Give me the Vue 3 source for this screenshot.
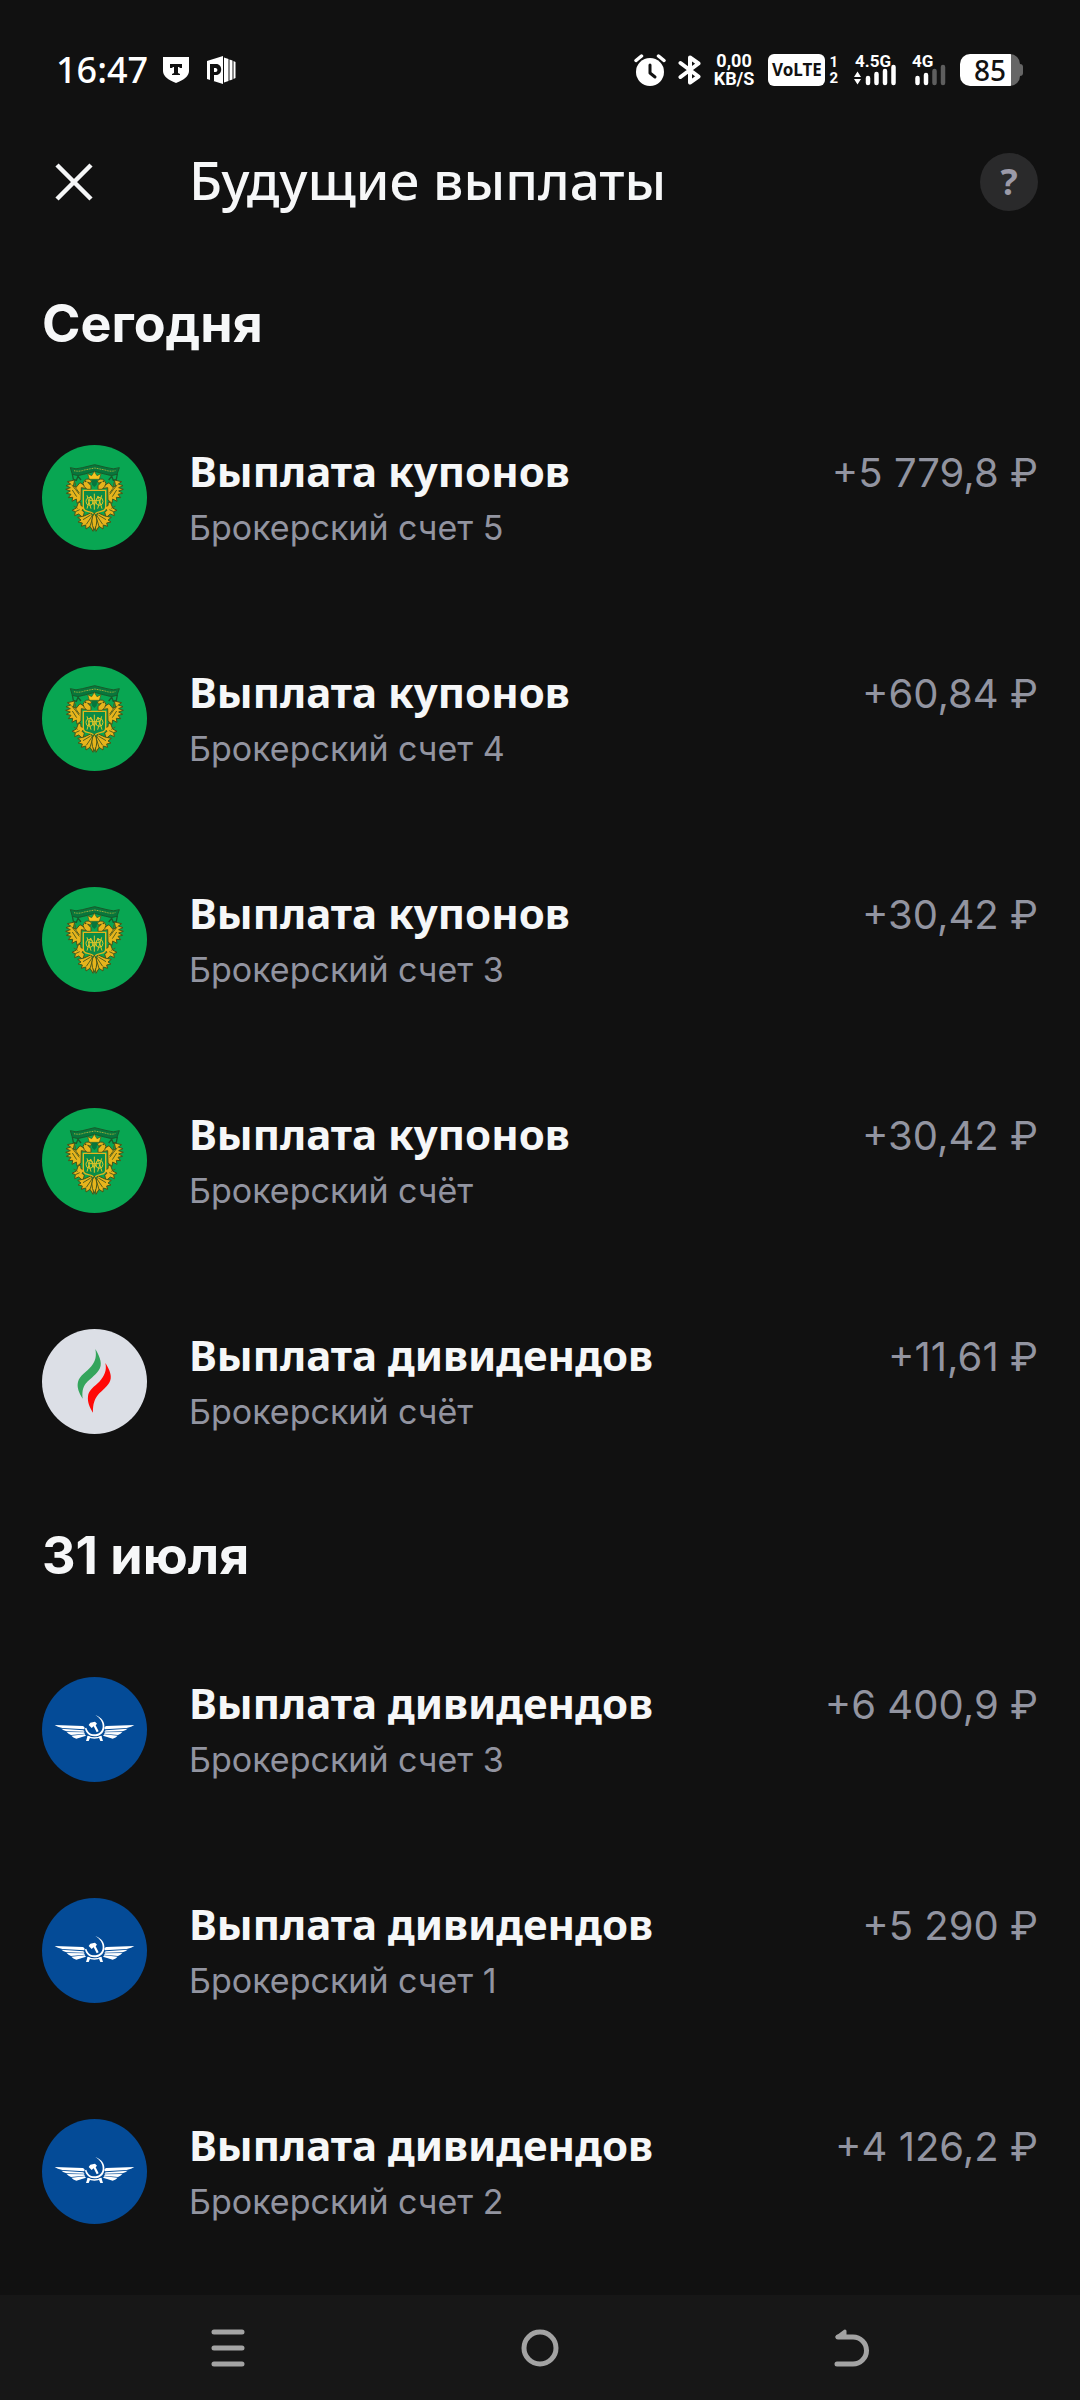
<script setup>
const groups = [
  {
    title: 'Сегодня',
    items: [
      { logo: 'ministry', name: 'Выплата купонов', account: 'Брокерский счет 5', amount: '+5 779,8 ₽' },
      { logo: 'ministry', name: 'Выплата купонов', account: 'Брокерский счет 4', amount: '+60,84 ₽' },
      { logo: 'ministry', name: 'Выплата купонов', account: 'Брокерский счет 3', amount: '+30,42 ₽' },
      { logo: 'ministry', name: 'Выплата купонов', account: 'Брокерский счёт', amount: '+30,42 ₽' },
      { logo: 'flame', name: 'Выплата дивидендов', account: 'Брокерский счёт', amount: '+11,61 ₽' },
    ],
  },
  {
    title: '31 июля',
    items: [
      { logo: 'wings', name: 'Выплата дивидендов', account: 'Брокерский счет 3', amount: '+6 400,9 ₽' },
      { logo: 'wings', name: 'Выплата дивидендов', account: 'Брокерский счет 1', amount: '+5 290 ₽' },
      { logo: 'wings', name: 'Выплата дивидендов', account: 'Брокерский счет 2', amount: '+4 126,2 ₽' },
    ],
  },
]
</script>

<template>
  <div class="screen">
    <div class="status">
      <div class="status-left">
        <span class="time">16:47</span>
        <svg width="28" height="28" viewBox="0 0 28 28" aria-hidden="true">
          <path d="M1 1h26v14c0 5-5 9-13 12C6 24 1 20 1 15z" fill="#fff" />
          <path d="M8 8h12v4h-2l-1-1h-1v6l2 1v1h-8v-1l2-1v-6h-1l-1 1H8z" fill="#111" />
        </svg>
        <svg class="office" width="30" height="30" viewBox="0 0 30 30" aria-hidden="true">
          <path d="M1 6 17 1v28L1 24z" fill="#fff" />
          <path d="M4 9h6c7 0 7 11 0 11H8v6H4z" fill="#111" />
          <path d="M8 13h1.500c2.500 0 2.500 4 0 4H8z" fill="#fff" />
          <path d="M18 2.500 22.500 4v22L18 27.500zM23.500 4.500l3 1v19l-3 1zM27.500 6l2 1v16l-2 1z" fill="#fff" />
        </svg>
      </div>
      <div class="status-right">
        <svg class="alarm" width="32" height="34" viewBox="0 0 32 34" aria-hidden="true">
          <circle cx="16" cy="19" r="14" fill="#fff" />
          <path d="M2 7.500 7.500 3M30 7.500 24.500 3" stroke="#fff" stroke-width="3.500" stroke-linecap="round" />
          <path d="M16 12v8l5 4" fill="none" stroke="#111" stroke-width="3" stroke-linecap="round" stroke-linejoin="round" />
        </svg>
        <svg class="bluetooth" width="24" height="32" viewBox="0 0 24 32" aria-hidden="true">
          <path d="M2.500 9 20.500 22.500 12 28.500v-25l8.500 6L2.500 23" fill="none" stroke="#fff" stroke-width="4" stroke-linecap="round" stroke-linejoin="round" />
        </svg>
        <span class="speed"><span>0,00</span><span>KB/S</span></span>
        <span class="volte">VoLTE</span>
        <span class="sims"><span>1</span><span>2</span></span>
        <svg class="signal" width="46" height="42" viewBox="0 -4 46 42">
          <text x="1" y="14">4.5G</text>
          <path d="M0 24h7L3.500 18.500zM0 26h7L3.500 31.500z" fill="#fff" />
          <path d="M14 25v5M22.500 21v9M31 18v12M39.500 14v16" stroke="#fff" stroke-width="4.500" stroke-linecap="round" />
        </svg>
        <svg class="signal second" width="36" height="42" viewBox="0 -4 36 42">
          <text x="0" y="14">4G</text>
          <path d="M5.500 25v5M14 22v8" stroke="#fff" stroke-width="4.500" stroke-linecap="round" />
          <path d="M22.500 18v12M31 14v16" stroke="#5e5e5e" stroke-width="4.500" stroke-linecap="round" />
        </svg>
        <span class="battery">85</span>
      </div>
    </div>

    <header class="header">
      <button class="close" type="button" aria-label="Закрыть">
        <svg width="38" height="38" viewBox="0 0 38 38" aria-hidden="true">
          <path d="m2 2 34 34M36 2 2 36" stroke="#f6f7f8" stroke-width="4.500" />
        </svg>
      </button>
      <h1>Будущие выплаты</h1>
      <button class="help" type="button">?</button>
    </header>

    <main>
      <section v-for="group in groups" :key="group.title">
        <h2>{{ group.title }}</h2>
        <ul>
          <li v-for="(item, i) in group.items" :key="i" class="row">
            <svg v-if="item.logo === 'ministry'" class="logo" viewBox="36 45 315 315" aria-hidden="true">
              <circle cx="193.500" cy="202.500" r="157.500" fill="#08a652" />
              <path d="M121 113q16 7 36 0l37-9 37 9q20 7 37 0l-7 20q-16 7-34 0l-33-9-33 9q-18 7-34 0z" fill="#08763c" stroke="#175a2a" stroke-width="3" />
              <path d="M132 122q16 4 31-2l31-6 31 6q16 6 31 2" fill="none" stroke="#b3b83a" stroke-width="3" stroke-dasharray="3 2" />
              <path d="m127 132 3 16 9 3 5-12 9 11M262 132l-3 16-9 3-5-12-9 11" fill="none" stroke="#175a2a" stroke-width="4" />
              <g v-for="side in ['left', 'right']" :key="side" :transform="side === 'right' ? 'translate(387 0) scale(-1 1)' : undefined">
                <path d="m134 150-22 5 10 7-14 5 13 6-14 5 14 5-12 7 14 3-8 10 13-1-2 12 13-7 2 13 12-10 1-37 16 3 7-16-14 6-13-8-11 13-9-2z" fill="#e6b41c" stroke="#47551a" stroke-width="3" />
                <path d="m135 157 3 18 10 14m-23-25 12 15 11 14m-21-13 13 20" fill="none" stroke="#57601b" stroke-width="3" />
                <path d="M163 170q-8-10 1-19 11-9 21 2l-4 7-8-4 10 11v11h-12z" fill="#e6b41c" stroke="#47551a" stroke-width="3" />
                <circle cx="167" cy="154" r="2.500" fill="#364e18" />
                <path d="m145 218-6 16-13 7 10 4-2 12 12-5 13 11 4-17-7-5 9-10-12-4-1-11z" fill="#e6b41c" stroke="#47551a" stroke-width="3" />
                <path d="m184 248-22 10-19 4 10 8-9 6 13 3-3 10 13-4 1 12 12-8 9 15 3-26z" fill="#e6b41c" stroke="#47551a" stroke-width="3" />
                <path d="m159 269 23-14m-13 28 17-25m-6 31 8-26m-57-35 12 7m-7 10 13-6" fill="none" stroke="#57601b" stroke-width="3" />
              </g>
              <path d="m178 148-5-17 12 6 8-13 8 13 12-6-5 17z" fill="#f4c420" stroke="#47551a" stroke-width="2" />
              <path d="M185 149h17l-2 15-7 7-7-7z" fill="#08763c" />
              <path d="M160 181h67v50q0 11-14 13-13 2-20 9-7-7-20-9-13-2-13-13z" fill="#0b8c47" stroke="#e6b41c" stroke-width="4" />
              <path d="m171 196 12 40M215 196l-12 40M193 191v48M171 236l11-38 11 28 11-28 12 38M168 215q0-13 12-13 9 0 9 12t-9 12q-12 0-12-11zm30 0q0-13 9-13 12 0 12 12t-12 12q-9 0-9-11zM179 212h28" fill="none" stroke="#ddc529" stroke-width="3" />
              <path d="M193 249q15 22 0 52-15-30 0-52z" fill="#e6b41c" stroke="#47551a" stroke-width="3" />
            </svg>
            <svg v-else-if="item.logo === 'flame'" class="logo" viewBox="36 57 315 315" aria-hidden="true">
              <circle cx="193.500" cy="214.500" r="157.500" fill="#dcdfe6" />
              <path d="M196 117c9 15 22 39 14 57-7 17-28 30-42 46-10 12-12 27-10 46-11-17-18-34-14-50 5-20 26-30 40-47 13-16 16-32 12-52z" fill="#34a55c" />
              <path d="M226 159c9 14 19 33 16 47-3 18-20 30-34 44-14 15-20 33-19 58-10-15-17-31-15-49 2-20 19-29 34-44 16-17 23-35 18-56z" fill="#ff0a08" />
            </svg>
            <svg v-else class="logo" viewBox="36 51 315 315" aria-hidden="true">
              <circle cx="193.500" cy="208.500" r="157.500" fill="#044b97" />
              <g fill="#fff">
                <path d="M196 165c19 7 29 21 27 38-2 17-15 27-30 26-15 0-26-10-28-24l4-2c4 13 12 20 24 20 14 0 24-9 25-22 1-14-7-27-22-36z" />
                <path d="m181 188 14-3 6 6-4 5 9 18-6 3-9-18-6 5-9-9z" />
                <g v-for="side in ['left', 'right']" :key="side" :transform="side === 'right' ? 'translate(387 0) scale(-1 1)' : undefined">
                  <path d="m74 195 84 3q8 2 5 10l-66-4q-15-3-23-9z" />
                  <path d="m94 206 66 5 4 4-54-1q-10-3-16-8zM110 216l52 1 3 4-42 4q-8-3-13-9zM124 227l40-4 4 4-29 9q-10-3-15-9z" />
                  <path d="m173 227 8 4-5 12h-8z" />
                </g>
                <path d="M174 227q19 10 39 0l2 4q-22 11-43 0z" />
              </g>
            </svg>
            <div class="info">
              <span class="name">{{ item.name }}</span>
              <span class="account">{{ item.account }}</span>
            </div>
            <span class="amount">{{ item.amount }}</span>
          </li>
        </ul>
      </section>
    </main>

    <nav class="nav">
      <button type="button" aria-label="Меню">
        <svg width="40" height="40" viewBox="0 0 40 40" aria-hidden="true">
          <path d="M6 4h28M6 20h28M6 36h28" stroke="#a3a3a3" stroke-width="5" stroke-linecap="round" />
        </svg>
      </button>
      <button type="button" aria-label="Домой">
        <svg width="40" height="40" viewBox="0 0 40 40" aria-hidden="true">
          <circle cx="20" cy="20" r="16" fill="none" stroke="#a3a3a3" stroke-width="5" />
        </svg>
      </button>
      <button type="button" aria-label="Назад">
        <svg width="40" height="40" viewBox="0 0 40 40" aria-hidden="true">
          <path d="M5 36h16a13.500 13.500 0 0 0 0-27H6" fill="none" stroke="#a3a3a3" stroke-width="5" stroke-linecap="round" />
          <path d="M5 9h8V3z" fill="#a3a3a3" stroke="#a3a3a3" stroke-width="3" stroke-linejoin="round" />
        </svg>
      </button>
    </nav>
  </div>
</template>

<style>
body {
  background: #111;
}
</style>

<style scoped>
.screen {
  display: flex;
  flex-direction: column;
  min-height: 100vh;
  background: #111;
  color: #f6f7f8;
  font-family: "Noto Sans", sans-serif;
}
.screen svg {
  display: block;
  flex: none;
}
button {
  padding: 0;
  border: 0;
  background: none;
  font-family: inherit;
}
.status {
  display: flex;
  justify-content: space-between;
  align-items: center;
  box-sizing: border-box;
  height: 104px;
  padding: 36px 60px 0 56px;
  color: #fff;
}
.status-left,
.status-right {
  display: flex;
  align-items: center;
}
.time {
  margin-right: 14px;
  font-size: 36px;
  line-height: 40px;
  font-weight: 500;
}
.office {
  margin-left: 16px;
}
.alarm,
.bluetooth {
  margin-right: 12px;
}
.speed,
.sims {
  display: flex;
  flex-direction: column;
  align-items: center;
  font-family: Roboto, sans-serif;
  font-size: 18px;
  line-height: 18px;
  font-weight: 700;
}
.volte {
  margin: 0 4px 0 14px;
  width: 57px;
  border-radius: 6px;
  background: #fff;
  color: #111;
  font-size: 17px;
  line-height: 32px;
  font-weight: 700;
  text-align: center;
}
.sims {
  font-size: 15px;
  line-height: 16px;
}
.signal {
  margin-left: 16px;
}
.signal.second {
  margin-left: 12px;
}
.signal text {
  fill: #fff;
  font-family: Roboto, sans-serif;
  font-size: 17px;
  font-weight: 700;
}
.battery {
  position: relative;
  margin-left: 12px;
  width: 60px;
  border-radius: 10px;
  background: linear-gradient(to right, #fff 51px, #666 51px);
  color: #111;
  font-size: 28px;
  line-height: 32px;
  font-weight: 500;
  text-align: center;
}
.battery::after {
  content: "";
  position: absolute;
  top: 10px;
  left: 60px;
  width: 3px;
  height: 12px;
  border-radius: 0 3px 3px 0;
  background: #666;
}
.header {
  display: flex;
  align-items: center;
  height: 156px;
  padding: 0 42px;
}
.close {
  display: flex;
  justify-content: center;
  width: 63px;
}
h1 {
  flex: 1;
  margin: 0 0 0 84px;
  padding-bottom: 4px;
  font-size: 53px;
  line-height: 64px;
  font-weight: 500;
}
.help {
  width: 58px;
  height: 58px;
  border-radius: 50%;
  background: #2a2a2b;
  color: #9c9aa8;
  font-size: 36px;
  line-height: 58px;
  font-weight: 700;
}
h2 {
  margin: 0;
  padding: 0 42px;
  font-family: Inter, "Noto Sans", sans-serif;
  font-size: 52px;
  line-height: 127px;
  font-weight: 700;
}
ul {
  margin: 0;
  padding: 0;
  list-style: none;
}
.row {
  display: flex;
  align-items: flex-start;
  padding: 58px 42px 50px;
}
.logo {
  width: 105px;
  height: 105px;
}
.info {
  display: flex;
  flex: 1;
  flex-direction: column;
  margin-left: 42px;
}
.name {
  font-size: 42px;
  line-height: 52px;
  font-weight: 700;
}
.account,
.amount {
  color: #9294a0;
  font-family: Inter, "Noto Sans", sans-serif;
}
.account {
  font-size: 34px;
  line-height: 61px;
}
.amount {
  font-size: 40px;
  line-height: 56px;
}
.nav {
  display: flex;
  box-sizing: border-box;
  height: 105px;
  margin-top: auto;
  padding: 0 72px;
  background: #171717;
}
.nav button {
  display: flex;
  flex: 1;
  align-items: center;
  justify-content: center;
}
</style>
